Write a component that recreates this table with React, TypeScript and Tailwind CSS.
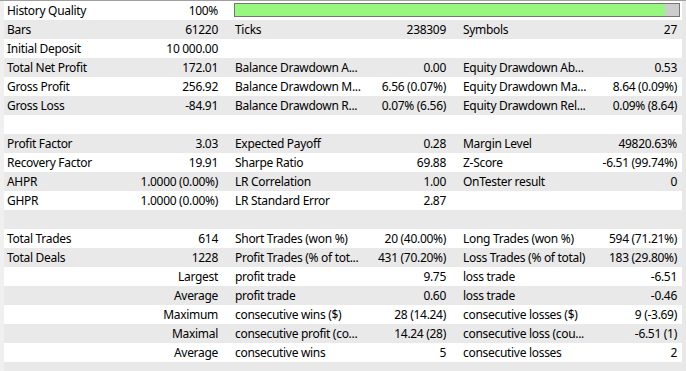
import React from 'react';

type Cell = [string, string];

const rows: Cell[][] = [
  [['History Quality', '100%']],
  [['Bars', '61220'], ['Ticks', '238309'], ['Symbols', '27']],
  [['Initial Deposit', '10 000.00'], ['', ''], ['', '']],
  [['Total Net Profit', '172.01'], ['Balance Drawdown A...', '0.00'], ['Equity Drawdown Ab...', '0.53']],
  [['Gross Profit', '256.92'], ['Balance Drawdown M...', '6.56 (0.07%)'], ['Equity Drawdown Ma...', '8.64 (0.09%)']],
  [['Gross Loss', '-84.91'], ['Balance Drawdown R...', '0.07% (6.56)'], ['Equity Drawdown Rel...', '0.09% (8.64)']],
  [['', ''], ['', ''], ['', '']],
  [['Profit Factor', '3.03'], ['Expected Payoff', '0.28'], ['Margin Level', '49820.63%']],
  [['Recovery Factor', '19.91'], ['Sharpe Ratio', '69.88'], ['Z-Score', '-6.51 (99.74%)']],
  [['AHPR', '1.0000 (0.00%)'], ['LR Correlation', '1.00'], ['OnTester result', '0']],
  [['GHPR', '1.0000 (0.00%)'], ['LR Standard Error', '2.87'], ['', '']],
  [['', ''], ['', ''], ['', '']],
  [['Total Trades', '614'], ['Short Trades (won %)', '20 (40.00%)'], ['Long Trades (won %)', '594 (71.21%)']],
  [['Total Deals', '1228'], ['Profit Trades (% of tot...', '431 (70.20%)'], ['Loss Trades (% of total)', '183 (29.80%)']],
  [['', 'Largest'], ['profit trade', '9.75'], ['loss trade', '-6.51']],
  [['', 'Average'], ['profit trade', '0.60'], ['loss trade', '-0.46']],
  [['', 'Maximum'], ['consecutive wins ($)', '28 (14.24)'], ['consecutive losses ($)', '9 (-3.69)']],
  [['', 'Maximal'], ['consecutive profit (co...', '14.24 (28)'], ['consecutive loss (cou...', '-6.51 (1)']],
  [['', 'Average'], ['consecutive wins', '5'], ['consecutive losses', '2']],
  [['', ''], ['', ''], ['', '']],
];

const labelW = ['w-[127px]', 'w-[127px]', 'w-[127px]'];
const valueW = ['w-[101px] pr-[14px]', 'w-[101px] pr-[14px]', 'w-[95px] pr-[5px]'];

const QualityBar = () => (
  <div className="flex-1 pl-[2px] pr-[2px] pt-[2px]">
    <div className="h-[14px] border border-[#767676] bg-[#cccccc] flex">
      <div className="h-full w-[430px] bg-[#98f77e]" />
    </div>
  </div>
);

export default function App() {
  return (
    <div
      className="w-[686px] h-[371px] overflow-hidden bg-white border-t border-[#a0a0a0] flex text-[12px] tracking-[-0.3px] text-black"
      style={{ fontFamily: '"Noto Sans", "Open Sans", sans-serif' }}
    >
      <div className="w-[4px] bg-[#f0f0f0]" />
      <div className="w-[678px] flex flex-col">
        {rows.map((row, i) => (
          <div
            key={i}
            className={`h-[19px] shrink-0 flex leading-[19px] ${i % 2 === 1 ? 'bg-[#e9e9e9]' : 'bg-white'}`}
          >
            {row.map((cell, j) => (
              <React.Fragment key={j}>
                <div className={`${labelW[j]} pl-[3px] whitespace-nowrap`}>{cell[0]}</div>
                <div className={`${valueW[j]} text-right whitespace-nowrap`}>{cell[1]}</div>
              </React.Fragment>
            ))}
            {i === 0 && <QualityBar />}
          </div>
        ))}
      </div>
      <div className="w-[4px] bg-[#e8e8e8]" />
    </div>
  );
}
